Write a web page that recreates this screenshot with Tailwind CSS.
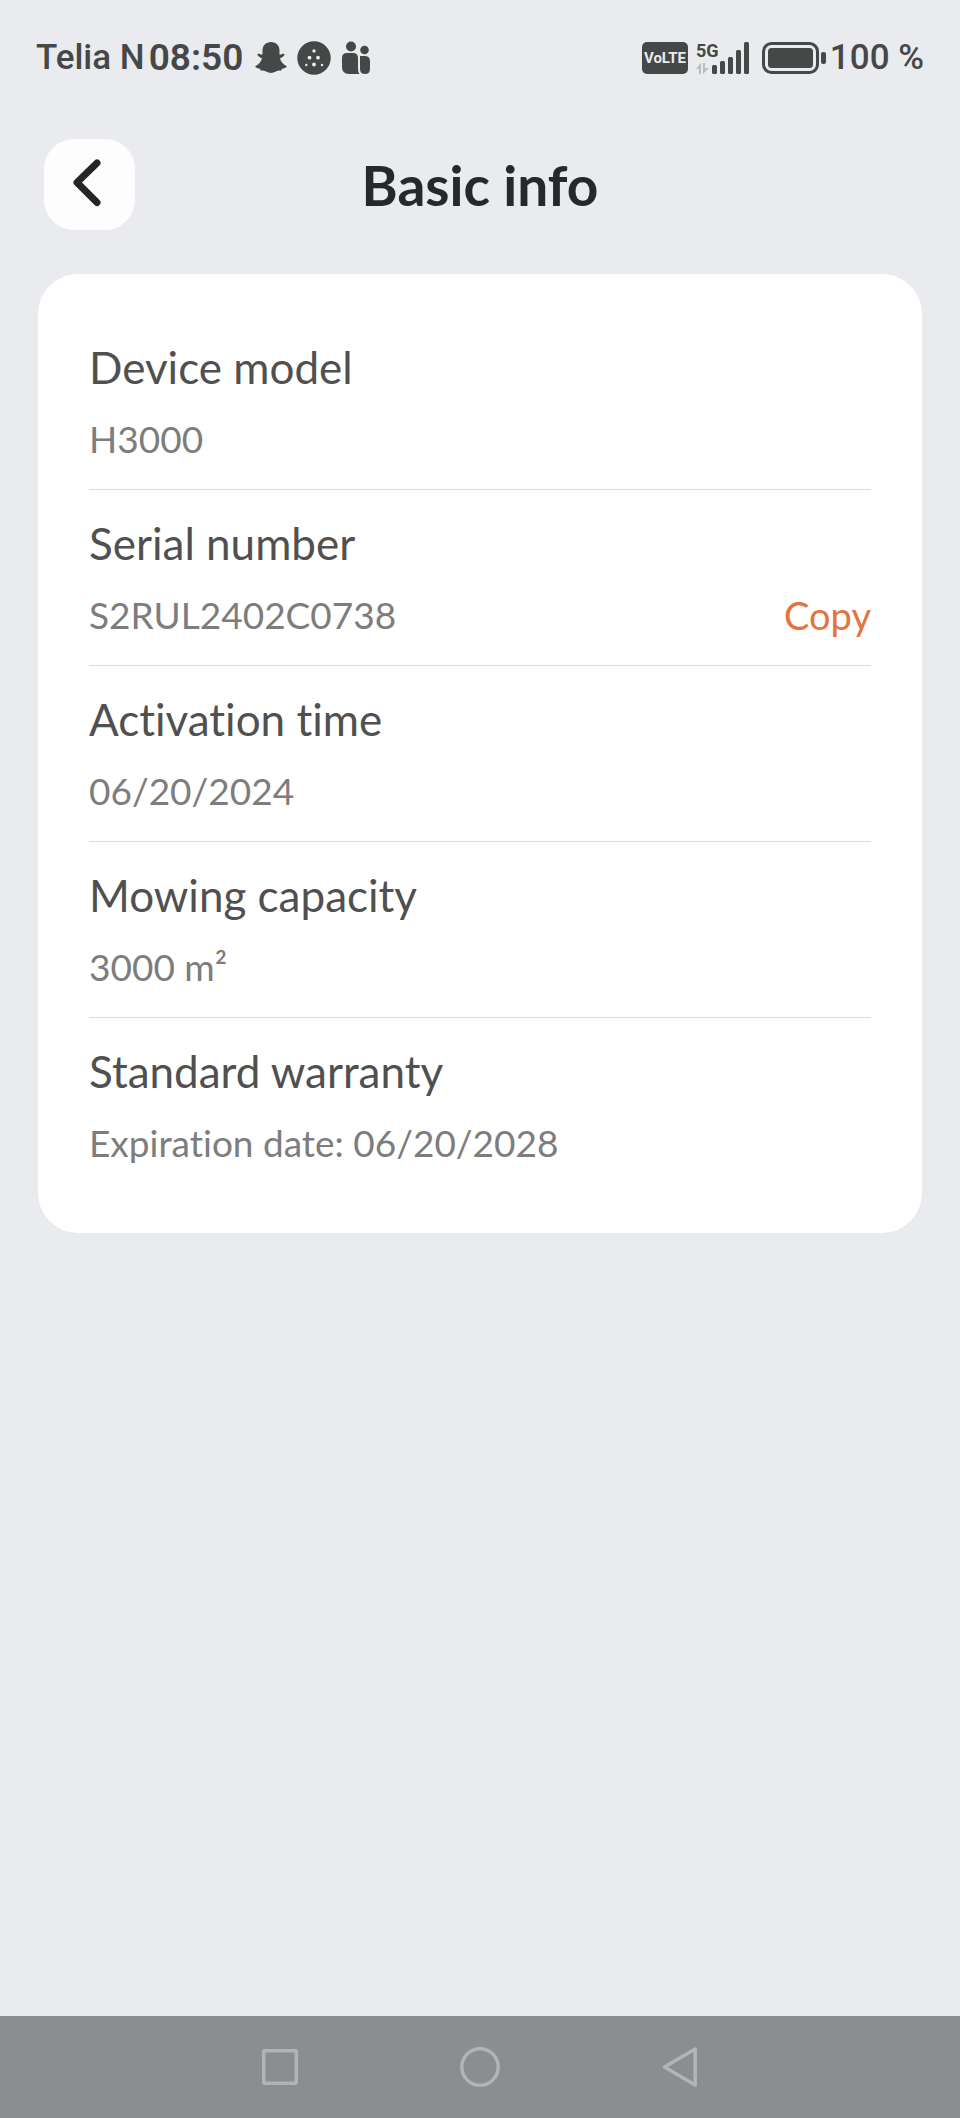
<!DOCTYPE html>
<html lang="en">
<head>
    <meta charset="UTF-8">
    <meta name="viewport" content="width=device-width, initial-scale=1.0">
    <title>Basic info</title>
    <script src="https://cdn.jsdelivr.net/npm/@tailwindcss/browser@4"></script>
</head>
<body class="min-h-screen flex flex-col bg-[#eaebef] font-['Lato',sans-serif] [font-variant-ligatures:none]">

    <!-- Status Bar -->
    <div class="flex justify-between items-center h-[115px] px-9 font-['Roboto',sans-serif] text-[#464747]">
        <div class="flex items-center">
            <span class="text-[35px] leading-10 font-medium mr-1">Telia N</span>
            <span class="text-[37px] leading-10 font-semibold mr-3">08:50</span>
            <div class="flex items-center gap-2.5" aria-hidden="true">
                <svg class="w-8 h-8" viewBox="0 0 32 32" fill="currentColor">
                    <path d="M16 0C21 0 24.5 3.500 24.500 8.500V12.500C26 13 28 11.300 29.200 12C30.300 13 28 15 25 16.500C26 20 28.500 22.500 31.500 24C32.300 25 30 26.300 27 26.800C26.600 28 26.500 28.800 25 28.600C21.500 28 20 31 16 31C12 31 10.500 28 7 28.600C5.500 28.800 5.400 28 5 26.800C2 26.300-.3 25 .5 24C3.500 22.500 6 20 7 16.500C4 15 1.700 13 2.800 12C4 11.300 6 13 7.500 12.500V8.500C7.500 3.500 11 0 16 0Z"/>
                </svg>
                <svg class="w-[34px] h-[34px]" viewBox="0 0 34 34">
                    <circle cx="17" cy="17" r="16.700" fill="currentColor"/>
                    <g fill="#eaebef">
                        <circle cx="17" cy="10" r="1.700"/>
                        <circle cx="12.500" cy="16.700" r="1.900"/>
                        <circle cx="21" cy="16.700" r="1.900"/>
                        <circle cx="17" cy="23.500" r="1.900"/>
                        <circle cx="9.300" cy="24" r="1.200"/>
                        <circle cx="25" cy="24" r="1.200"/>
                    </g>
                </svg>
                <svg class="w-[30px] h-[34px]" viewBox="0 0 30 34" fill="currentColor">
                    <circle cx="10" cy="5.500" r="5"/>
                    <circle cx="23.500" cy="9" r="4.300"/>
                    <path d="M6 12H12Q17 12 17 17V28Q17 31 18.500 33H8Q1 33 1 26V17Q1 12 6 12Z"/>
                    <path d="M23.500 15Q29 15 29 20V28Q29 33 24 33Q19 33 19 28V15Z"/>
                </svg>
            </div>
        </div>
        <div class="flex items-center">
            <svg class="w-[46px] h-8 mr-2" viewBox="0 0 46 32" role="img" aria-label="VoLTE">
                <rect width="46" height="32" rx="5" fill="currentColor"/>
                <text x="23" y="21" text-anchor="middle" fill="#eaebef" font-size="15" font-weight="700">VoLTE</text>
            </svg>
            <svg class="w-[54px] h-8 mr-3 overflow-visible" viewBox="0 0 54 32" role="img" aria-label="5G signal">
                <text x="0" y="15" fill="currentColor" font-size="18" font-weight="700">5G</text>
                <path d="M0 27L5 21V32H3V27ZM7 21H9V26H13L7 32Z" fill="#bbbcbf"/>
                <g fill="currentColor">
                    <rect x="16" y="23" width="5" height="9" rx="1.500"/>
                    <rect x="24" y="19" width="5" height="13" rx="1.500"/>
                    <rect x="32" y="15" width="5" height="17" rx="1.500"/>
                    <rect x="40" y="8" width="5" height="24" rx="1.500"/>
                    <rect x="48" y="0" width="5" height="32" rx="1.500"/>
                </g>
            </svg>
            <svg class="w-16 h-8 mr-1" viewBox="0 0 64 32" role="img" aria-label="Battery full">
                <rect x="1.500" y="1.500" width="54" height="29" rx="8" fill="none" stroke="currentColor" stroke-width="3"/>
                <rect x="6" y="6" width="45" height="20" rx="3.500" fill="currentColor"/>
                <rect x="59" y="10" width="5" height="12" rx="2" fill="currentColor"/>
            </svg>
            <span class="text-[35px] leading-10 font-medium">100 %</span>
        </div>
    </div>

    <!-- Header -->
    <header class="grid grid-cols-[1fr_auto_1fr] items-center px-11 pt-6">
        <button type="button" aria-label="Back" class="w-[91px] h-[91px] flex justify-center items-center rounded-[30px] bg-[#fdfdfd] text-[#242527]">
            <svg class="w-12 h-12 overflow-visible" viewBox="0 0 48 48" fill="none" stroke="currentColor" stroke-width="7" stroke-linecap="round" stroke-linejoin="round">
                <path d="M31 2L11 21.500L31 41.500"/>
            </svg>
        </button>
        <h1 class="text-[55px] leading-[60px] font-bold text-[#26282c]">Basic info</h1>
    </header>

    <!-- Device Details -->
    <main class="grow px-[38px] pt-11">
        <dl class="px-[51px] py-10 rounded-[40px] bg-white text-[#505050]">
            <div class="pt-[25px] pb-[26px] border-b border-[#d9dadb]">
                <dt class="text-[44px] leading-[56px] mb-5">Device model</dt>
                <dd class="text-[37px] leading-[48px] text-[#7d7d7d]">H3000</dd>
            </div>
            <div class="pt-[25px] pb-[26px] border-b border-[#d9dadb]">
                <dt class="text-[44px] leading-[56px] mb-5">Serial number</dt>
                <dd class="flex justify-between text-[37px] leading-[48px] text-[#7d7d7d]">
                    <span id="serial">S2RUL2402C0738</span>
                    <button type="button" class="text-[38px] text-[#e5733f]" onclick="copySerial()">Copy</button>
                </dd>
            </div>
            <div class="pt-[25px] pb-[26px] border-b border-[#d9dadb]">
                <dt class="text-[44px] leading-[56px] mb-5">Activation time</dt>
                <dd class="text-[37px] leading-[48px] text-[#7d7d7d]">06/20/2024</dd>
            </div>
            <div class="pt-[25px] pb-[26px] border-b border-[#d9dadb]">
                <dt class="text-[44px] leading-[56px] mb-5">Mowing capacity</dt>
                <dd class="text-[37px] leading-[48px] text-[#7d7d7d]">3000 m²</dd>
            </div>
            <div class="pt-[25px] pb-[26px]">
                <dt class="text-[44px] leading-[56px] mb-5">Standard warranty</dt>
                <dd class="text-[37px] leading-[48px] text-[#7d7d7d]">Expiration date: 06/20/2028</dd>
            </div>
        </dl>
    </main>

    <!-- System Navigation -->
    <nav class="flex justify-center items-center gap-40 h-[102px] bg-[#8c8d8f] text-[#b3b4b6]">
        <button type="button" aria-label="Recent apps">
            <svg class="w-10 h-10" viewBox="0 0 40 40" fill="none" stroke="currentColor" stroke-width="3.500">
                <rect x="3.700" y="3.700" width="32.600" height="32.600" rx="1"/>
            </svg>
        </button>
        <button type="button" aria-label="Home">
            <svg class="w-10 h-10" viewBox="0 0 40 40" fill="none" stroke="currentColor" stroke-width="3.500">
                <circle cx="20" cy="20" r="18.200"/>
            </svg>
        </button>
        <button type="button" aria-label="Back to previous screen">
            <svg class="w-10 h-10" viewBox="0 0 40 40" fill="none" stroke="currentColor" stroke-width="3.500" stroke-linejoin="round">
                <path d="M35.200 2L4.500 20L35.200 38Z"/>
            </svg>
        </button>
    </nav>

    <script>
        function copySerial() {
            const serial = document.getElementById('serial').textContent;
            navigator.clipboard.writeText(serial);
        }
    </script>
</body>
</html>
